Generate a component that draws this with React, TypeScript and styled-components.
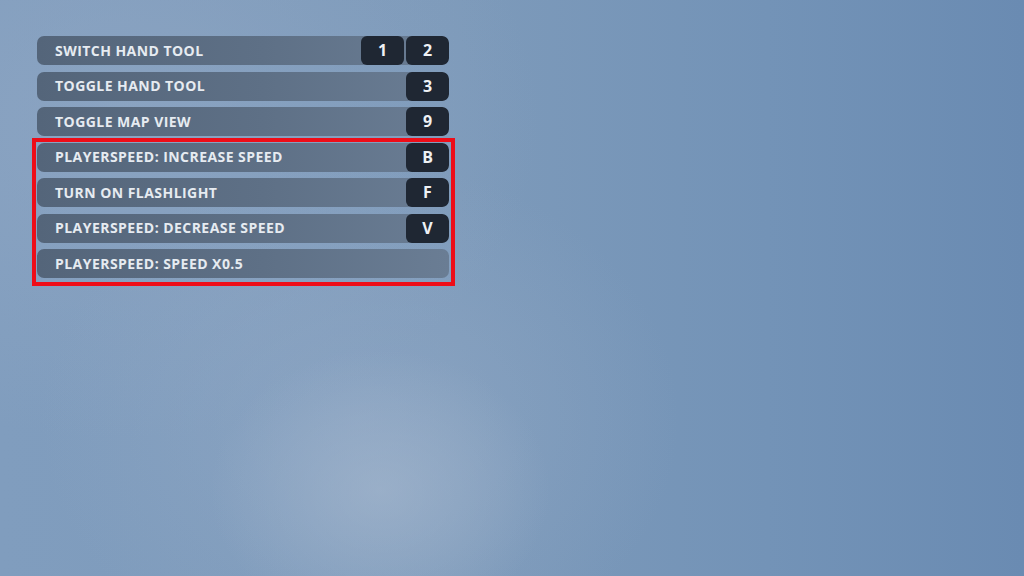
import React from 'react'
import styled, { createGlobalStyle } from 'styled-components'

const GlobalStyle = createGlobalStyle`
  html, body {
    margin: 0;
    padding: 0;
    width: 100%;
    height: 100%;
    overflow: hidden;
  }
  body {
    font-family: 'Open Sans', 'Liberation Sans', sans-serif;
  }
`

const Sky = styled.main`
  width: 1024px;
  height: 576px;
  box-sizing: border-box;
  padding: 36px 0 0 37px;
  background:
    radial-gradient(ellipse 170px 140px at 380px 490px, rgba(166, 184, 206, 0.6), rgba(166, 184, 206, 0) 100%),
    radial-gradient(ellipse 320px 260px at 360px 420px, rgba(150, 172, 200, 0.5), rgba(150, 172, 200, 0) 100%),
    radial-gradient(ellipse 420px 320px at 120px 120px, rgba(146, 168, 196, 0.6), rgba(146, 168, 196, 0) 100%),
    linear-gradient(90deg, #809dbe 0%, #7d9aba 45%, #7393b7 75%, #6a8bb2 100%);
`

const List = styled.div`
  width: 412px;
  display: flex;
  flex-direction: column;
  gap: 6.5px;
`

const Highlight = styled.div`
  display: flex;
  flex-direction: column;
  gap: 6.5px;
  margin: -5px -6px 0 -5px;
  padding: 1px 2px 4px 1px;
  border: 4px solid #ee0d18;
`

const Row = styled.div`
  height: 29px;
  display: flex;
  align-items: stretch;
  border-radius: 7px;
  overflow: hidden;
  background: linear-gradient(90deg, #54657a 0%, #5e7086 55%, #6a7d94 100%);
`

const Label = styled.span`
  flex: 1;
  display: flex;
  align-items: center;
  padding: 0 0 1px 18px;
  font-size: 14px;
  font-weight: 700;
  color: #e6ebf1;
  letter-spacing: 0.45px;
  white-space: nowrap;
`

const Keys = styled.div`
  display: flex;
  gap: 2px;
`

const Key = styled.span`
  width: 43px;
  display: flex;
  align-items: center;
  justify-content: center;
  padding-bottom: 1px;
  background: #1f2733;
  border-radius: 6px;
  font-size: 16px;
  font-weight: 700;
  color: #eef1f5;
`

type Binding = { label: string; keys: string[] }

const top: Binding[] = [
  { label: 'SWITCH HAND TOOL', keys: ['1', '2'] },
  { label: 'TOGGLE HAND TOOL', keys: ['3'] },
  { label: 'TOGGLE MAP VIEW', keys: ['9'] },
]

const marked: Binding[] = [
  { label: 'PLAYERSPEED: INCREASE SPEED', keys: ['B'] },
  { label: 'TURN ON FLASHLIGHT', keys: ['F'] },
  { label: 'PLAYERSPEED: DECREASE SPEED', keys: ['V'] },
  { label: 'PLAYERSPEED: SPEED X0.5', keys: [] },
]

const BindingRow = ({ label, keys }: Binding) => (
  <Row>
    <Label>{label}</Label>
    {keys.length > 0 && (
      <Keys>
        {keys.map((k) => (
          <Key key={k}>{k}</Key>
        ))}
      </Keys>
    )}
  </Row>
)

const App: React.FC = () => (
  <>
    <GlobalStyle />
    <Sky>
      <List>
        {top.map((b) => (
          <BindingRow key={b.label} {...b} />
        ))}
        <Highlight>
          {marked.map((b) => (
            <BindingRow key={b.label} {...b} />
          ))}
        </Highlight>
      </List>
    </Sky>
  </>
)

export default App
